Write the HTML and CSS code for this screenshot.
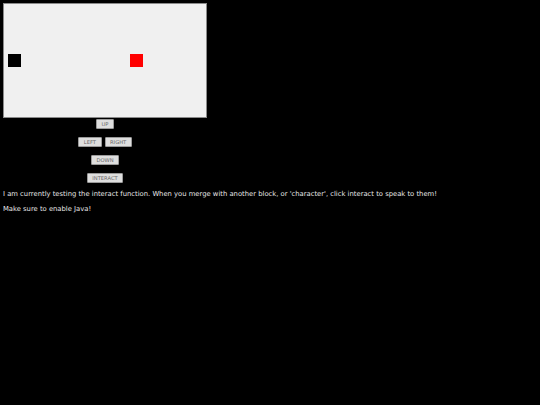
FILE: index.html
```html
<!DOCTYPE html>
<html>
<head>
<meta charset="utf-8">
<link rel="stylesheet" href="styles.css">
</head>
<body>
<div class="game">
  <div class="stage">
    <div class="block player"></div>
    <div class="block npc"></div>
  </div>
  <div class="controls">
    <div class="row"><button class="btn">UP</button></div>
    <div class="row"><button class="btn">LEFT</button><button class="btn">RIGHT</button></div>
    <div class="row"><button class="btn">DOWN</button></div>
    <div class="row"><button class="btn">INTERACT</button></div>
  </div>
</div>
<p class="note">I am currently testing the interact function. When you merge with another block, or 'character', click interact to speak to them!</p>
<p class="note">Make sure to enable Java!</p>
</body>
</html>
```
FILE: styles.css
```css
html, body {
  background: #000;
}
body {
  margin: 3px;
  font-family: "DejaVu Sans", Verdana, sans-serif;
  color: #e6e6e6;
}
.game {
  width: 204px;
}
.stage {
  position: relative;
  width: 202px;
  height: 113px;
  border: 1px solid #8a8a8a;
  background: #f0f0f0;
}
.block {
  position: absolute;
  top: 50px;
  width: 13px;
  height: 13px;
}
.player {
  left: 4px;
  background: #000;
}
.npc {
  left: 126px;
  background: #ff0000;
}
.controls {
  display: flex;
  flex-direction: column;
  align-items: center;
  gap: 8px;
  margin-top: 1px;
}
.row {
  display: flex;
  gap: 3px;
}
.btn {
  height: 10px;
  padding: 0 4.5px;
  margin: 0;
  border: 1px solid #9a9a9a;
  border-radius: 1px;
  background: #dedede;
  color: #666;
  font-family: "DejaVu Sans", Verdana, sans-serif;
  font-size: 5.2px;
  line-height: 8px;
}
.note {
  margin: 7px 0 0 0;
  font-size: 6.8px;
  line-height: 9px;
}
.note + .note {
  margin-top: 6px;
}
```
